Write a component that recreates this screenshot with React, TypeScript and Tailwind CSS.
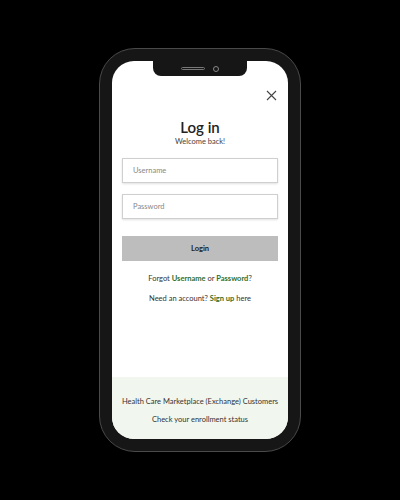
import React from 'react';

const font = { fontFamily: 'Lato, "Noto Sans", sans-serif' };

export default function App() {
  return (
    <div className="w-[400px] h-[500px] bg-black flex items-center justify-center" style={font}>
      {/* phone body */}
      <div className="w-[202px] h-[404px] rounded-[36px] border border-[#4a4a4a] bg-[#161616] p-[12px]">
        <div className="relative w-full h-full rounded-[22px] bg-white overflow-hidden flex flex-col">
          {/* notch */}
          <div className="absolute left-1/2 -translate-x-1/2 top-0 w-[94px] h-[15px] bg-[#161616] rounded-b-[8px] flex items-center justify-center gap-[8px]">
            <div className="w-[24px] h-[3px] rounded-full border border-[#777]" />
            <div className="w-[6px] h-[6px] rounded-full border border-[#888]" />
          </div>

          <div className="flex justify-end pt-[29px] pr-[11px]">
            <svg width="11" height="11" viewBox="0 0 11 11" className="text-[#444]">
              <path d="M1 1 L10 10 M10 1 L1 10" stroke="currentColor" strokeWidth="1.1" />
            </svg>
          </div>

          <div className="flex flex-col items-center mt-[17px]">
            <h1 className="text-[15px] font-semibold text-[#222] leading-[18px]">Log in</h1>
            <p className="text-[7.5px] text-[#444] mt-[1px] leading-[10px]">Welcome back!</p>
          </div>

          <div className="px-[10px] mt-[11px] flex flex-col">
            <div className="h-[25px] border border-[#cfcfcf] shadow-[0_1px_2px_rgba(0,0,0,0.12)] flex items-center pl-[10px] text-[7.5px] text-[#888]">
              Username
            </div>
            <div className="h-[25px] mt-[11px] border border-[#cfcfcf] shadow-[0_1px_2px_rgba(0,0,0,0.12)] flex items-center pl-[10px] text-[7.5px] text-[#888]">
              Password
            </div>
            <div className="h-[25px] mt-[17px] bg-[#bdbdbd] flex items-center justify-center text-[7.5px] font-bold text-[#222]">
              Login
            </div>
          </div>

          <p className="text-center text-[7.5px] text-[#333] mt-[13px] leading-[10px]">
            Forgot <span className="font-bold text-[#2f6f2a]">Username</span> or{' '}
            <span className="font-bold text-[#2f6f2a]">Password</span>?
          </p>
          <p className="text-center text-[7.5px] text-[#333] mt-[10px] leading-[10px]">
            Need an account? <span className="font-bold text-[#2f6f2a]">Sign up</span> here
          </p>

          <div className="flex-1" />

          <div className="h-[62px] bg-[#f1f7ef] flex flex-col items-center pt-[20px]">
            <p className="text-[7.5px] text-[#333] leading-[10px]">Health Care Marketplace (Exchange) Customers</p>
            <p className="text-[7.5px] text-[#333] leading-[10px] mt-[8px]">Check your enrollment status</p>
          </div>
        </div>
      </div>
    </div>
  );
}
